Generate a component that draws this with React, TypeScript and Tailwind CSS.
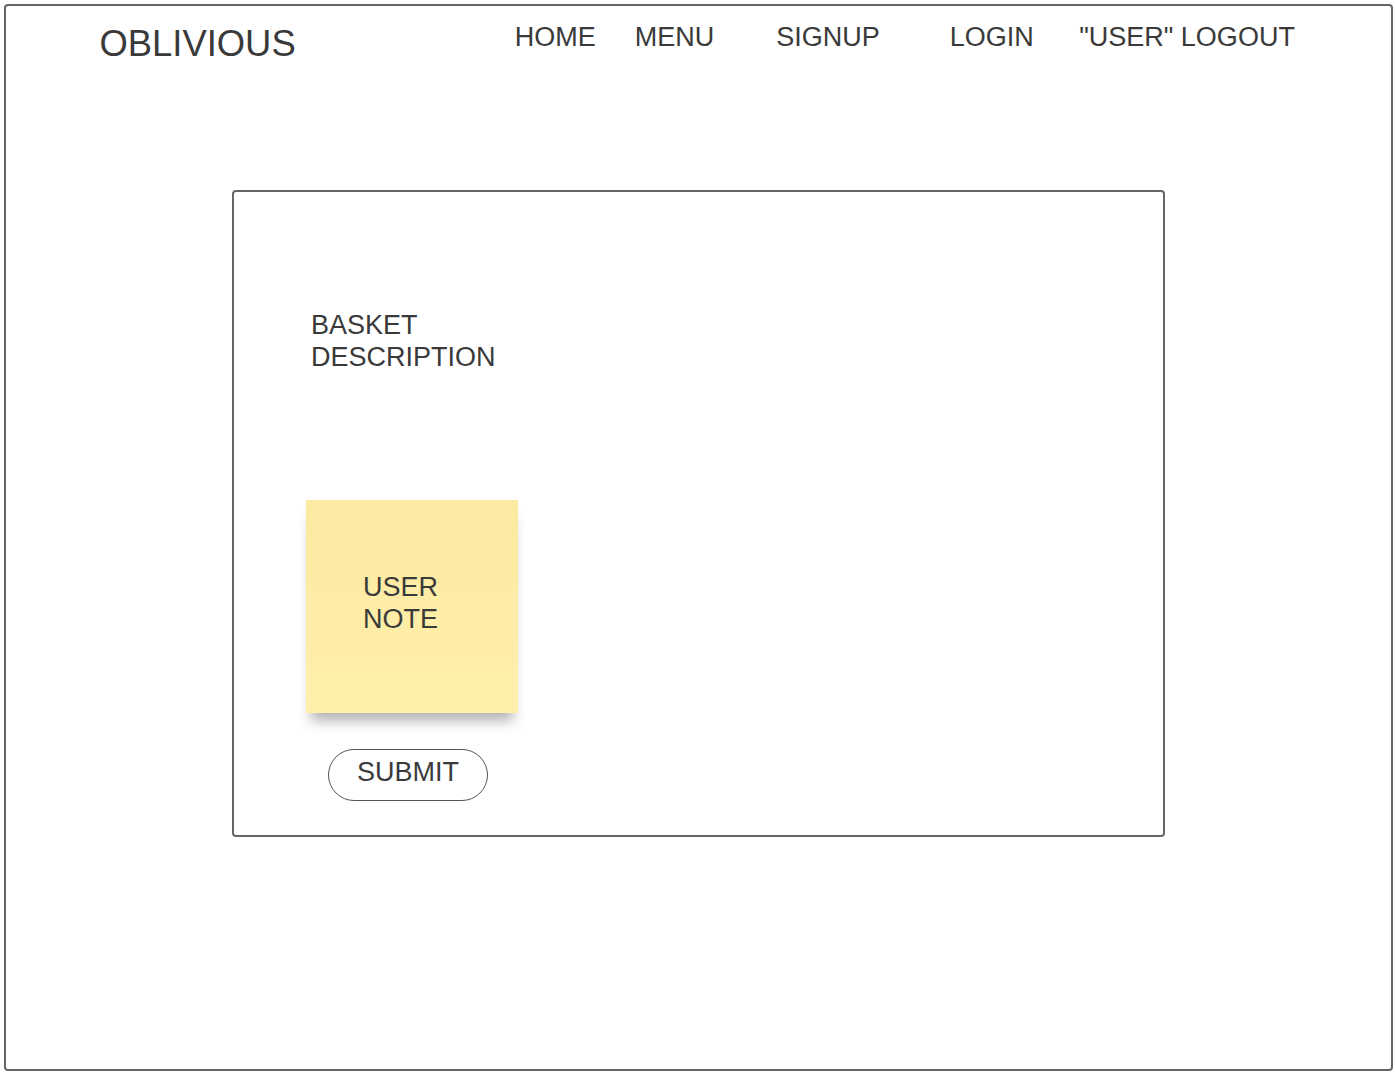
import React from "react";

export default function App() {
  return (
    <div
      className="w-[1395px] h-[1072px] bg-white pl-[4px] pt-[4px] text-[#3a3a3a]"
      style={{ fontFamily: '"Liberation Sans", Arial, sans-serif' }}
    >
      <div className="w-[1389px] h-[1067px] border-2 border-[#666666] rounded-[4px] bg-white">
        {/* Header */}
        <div className="h-[184px] flex items-start">
          <div className="ml-[93.5px] mt-[11px] text-[36.4px] leading-normal whitespace-nowrap">
            OBLIVIOUS
          </div>
          <nav className="ml-[219px] mt-[11px] flex text-[27px] leading-normal whitespace-nowrap">
            <a className="w-[120px]">HOME</a>
            <a className="w-[141.5px]">MENU</a>
            <a className="w-[173.5px]">SIGNUP</a>
            <a className="w-[129.5px]">LOGIN</a>
            <a>"USER" LOGOUT</a>
          </nav>
        </div>

        {/* Card */}
        <div className="ml-[226px] w-[933px] h-[647px] border-2 border-[#666666] rounded-[4px] flex flex-col items-start">
          <div className="ml-[77px] mt-[116.7px] text-[27px] leading-[32.5px]">
            BASKET
            <br />
            DESCRIPTION
          </div>

          <div className="ml-[72px] mt-[126px] w-[212px] h-[213px] bg-gradient-to-b from-[#fce9a2] to-[#fff0a9] shadow-[0_13px_12px_-5px_rgba(0,0,0,0.3)]">
            <div className="ml-[57px] mt-[71.3px] text-[27px] leading-[32.5px]">
              USER
              <br />
              NOTE
            </div>
          </div>

          <button className="ml-[94px] mt-[36px] w-[160px] h-[52px] border-[1.5px] border-[#555555] rounded-full flex items-center justify-center pb-[4px] text-[27px] leading-normal text-[#3a3a3a] bg-white">
            SUBMIT
          </button>
        </div>
      </div>
    </div>
  );
}
